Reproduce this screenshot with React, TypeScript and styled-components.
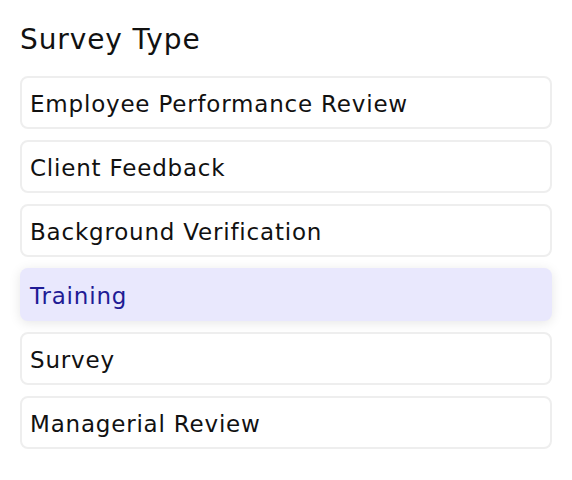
import React, { useState } from "react";
import styled, { createGlobalStyle } from "styled-components";

const Global = createGlobalStyle`
  html, body { margin: 0; padding: 0; background: #ffffff; }
  body { font-family: "DejaVu Sans", "Noto Sans", sans-serif; }
`;

const Page = styled.div`
  padding: 18px 20px 0 20px;
  width: 572px;
  box-sizing: border-box;
`;

const Title = styled.h2`
  margin: 0 0 14px 0;
  font-size: 28px;
  font-weight: 400;
  line-height: 44px;
  color: #111111;
  letter-spacing: 0.9px;
`;

const List = styled.div`
  display: flex;
  flex-direction: column;
  gap: 11px;
`;

const Option = styled.button<{ $active: boolean }>`
  display: flex;
  align-items: center;
  height: 53px;
  box-sizing: border-box;
  padding: 3px 8px 0 8px;
  border-radius: 8px;
  border: 2px solid ${(p) => (p.$active ? "transparent" : "#eeeeee")};
  background: ${(p) => (p.$active ? "#e9e8fd" : "#ffffff")};
  box-shadow: ${(p) => (p.$active ? "0 2px 12px rgba(0,0,0,0.10)" : "none")};
  color: ${(p) => (p.$active ? "#1f1b95" : "#111111")};
  font-family: inherit;
  font-size: 23px;
  letter-spacing: 0.8px;
  text-align: left;
  cursor: pointer;
`;

const items = [
  "Employee Performance Review",
  "Client Feedback",
  "Background Verification",
  "Training",
  "Survey",
  "Managerial Review",
];

export default function App() {
  const [sel, setSel] = useState("Training");
  return (
    <>
      <Global />
      <Page>
        <Title>Survey Type</Title>
        <List>
          {items.map((it) => (
            <Option key={it} $active={it === sel} onClick={() => setSel(it)}>
              {it}
            </Option>
          ))}
        </List>
      </Page>
    </>
  );
}
